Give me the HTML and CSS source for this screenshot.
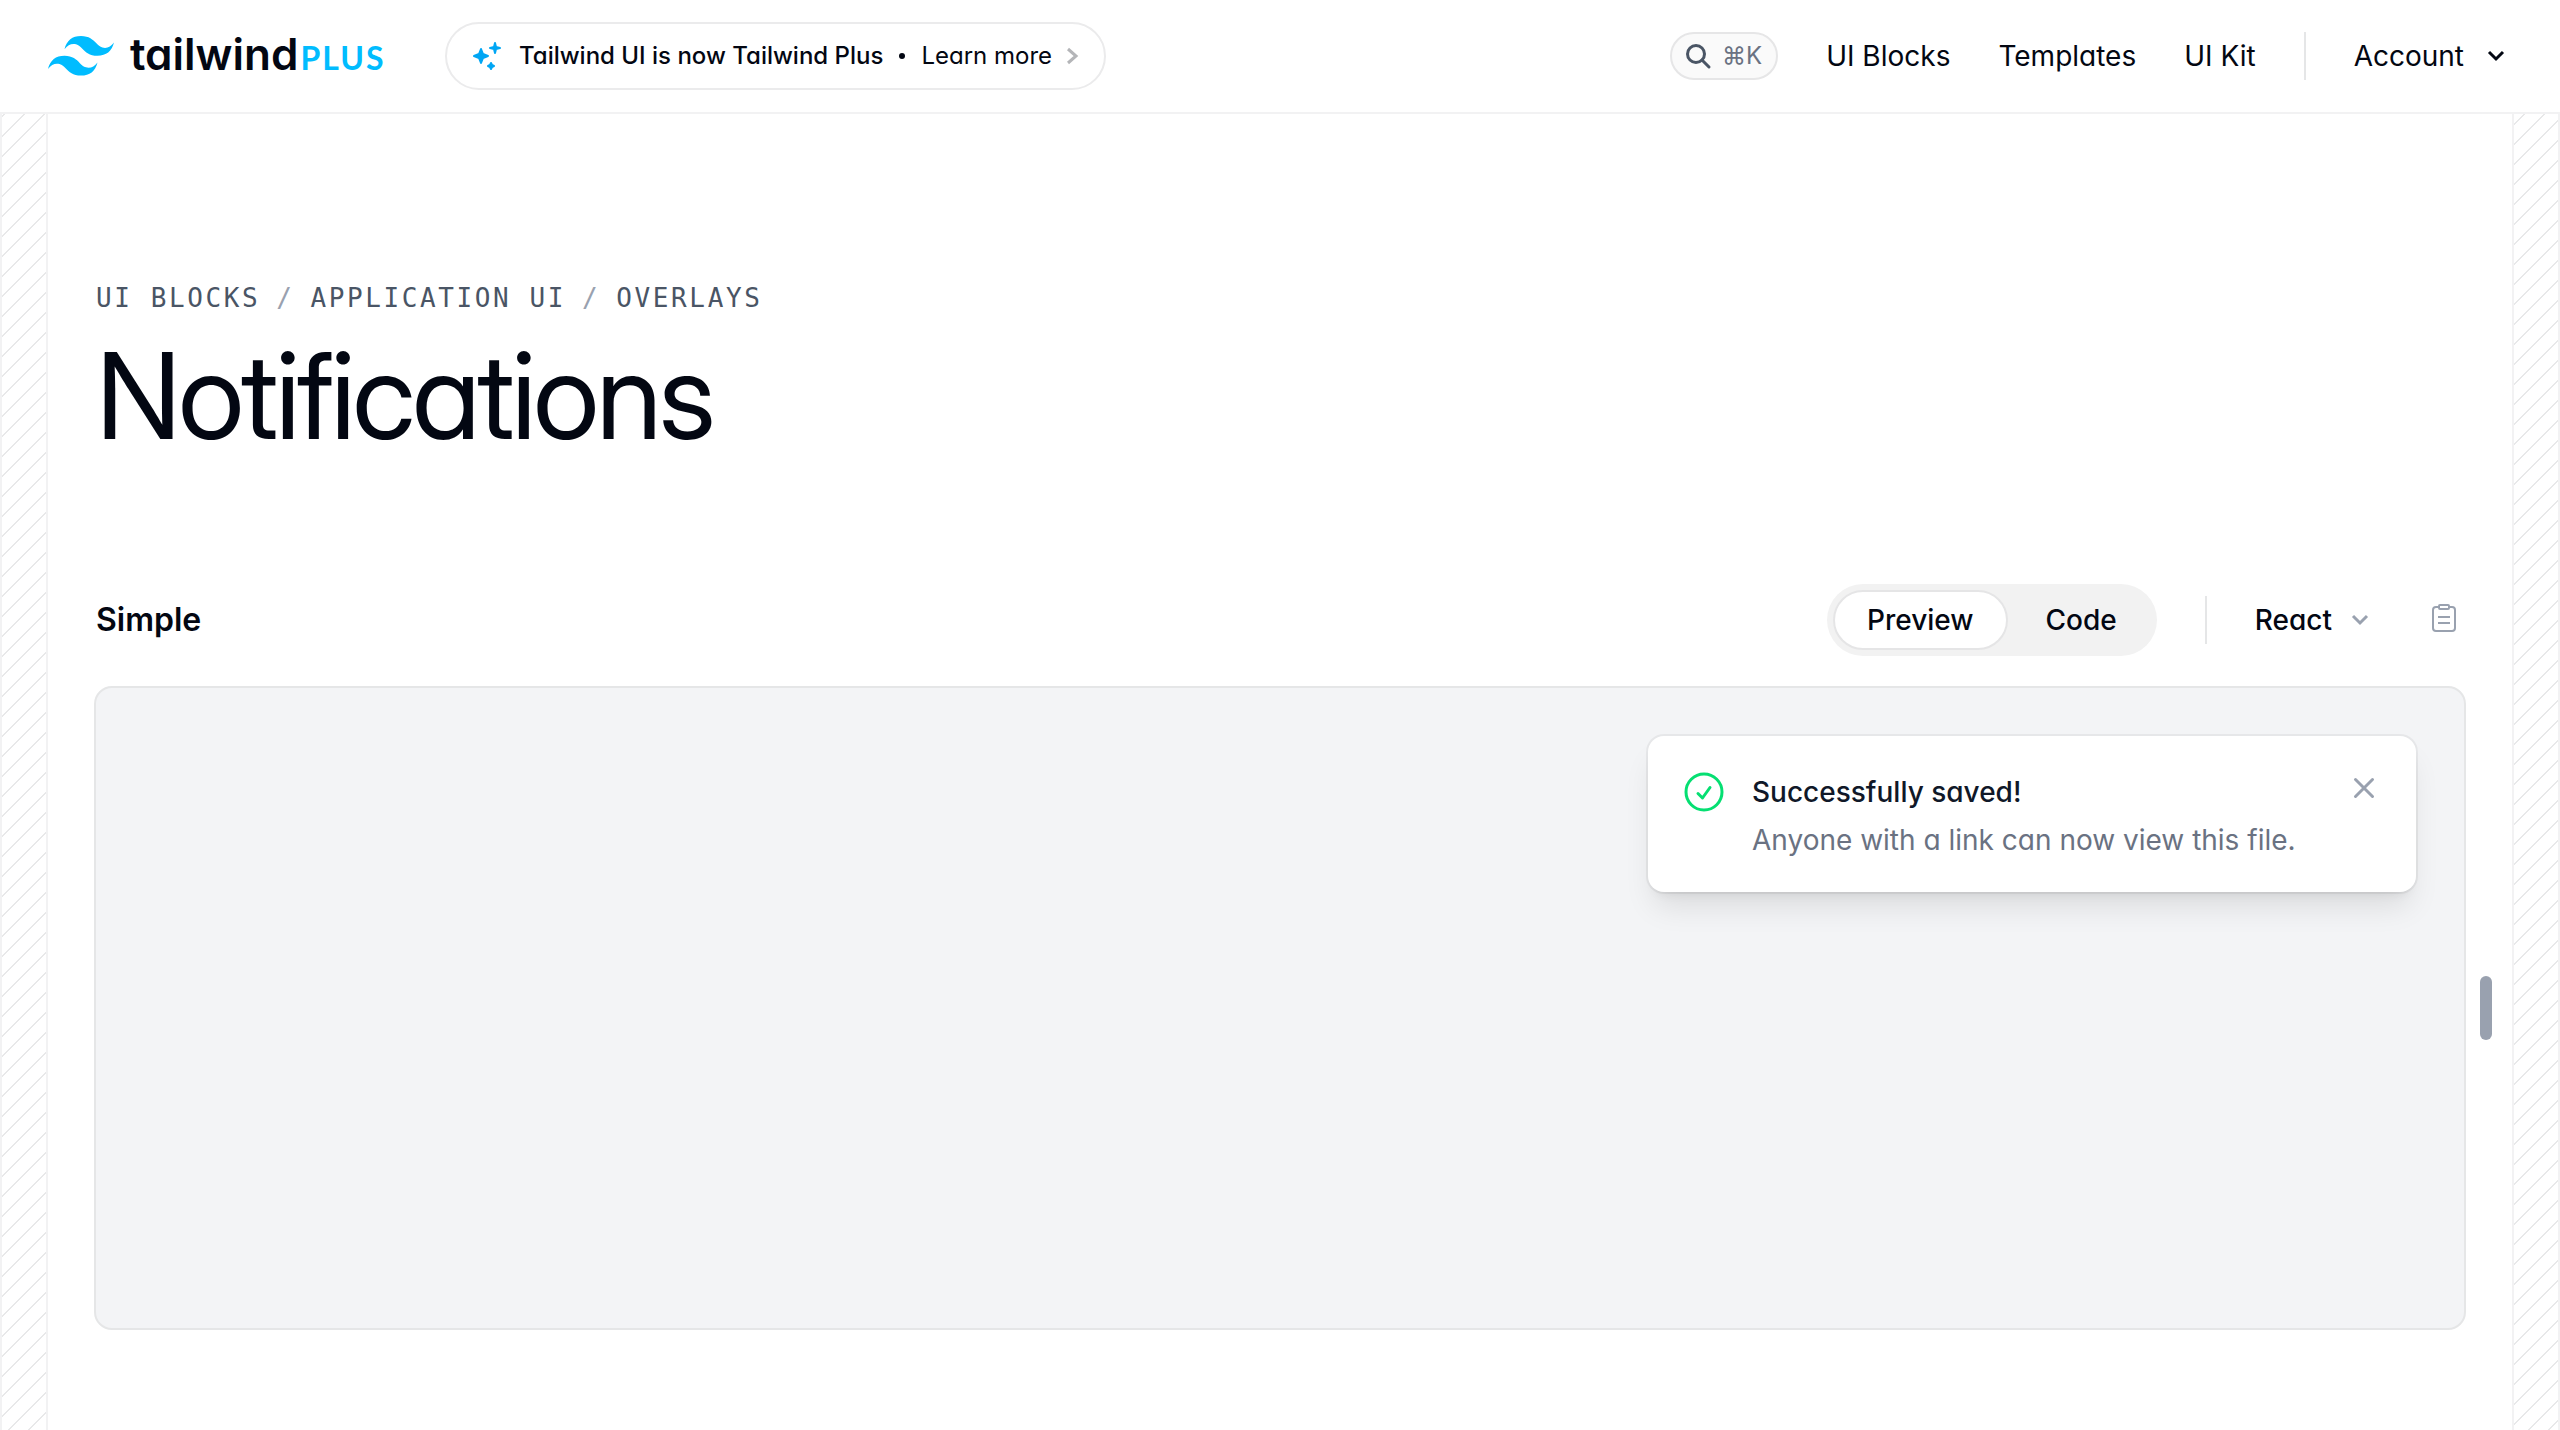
FILE: index.html
```html
<!DOCTYPE html>
<html lang="en">
<head>
<meta charset="utf-8">
<meta name="viewport" content="width=device-width, initial-scale=1">
<title>Notifications - Tailwind Plus</title>
<link rel="stylesheet" href="styles.css">
</head>
<body>
<header class="site-header">
  <a class="logo" href="#">
    <svg class="logo-mark" viewBox="0 0 66 40" aria-hidden="true"><path fill="currentColor" d="M33 0C24.200 0 18.700 4.400 16.500 13.200C19.800 8.800 23.650 7.150 28.050 8.250C30.561 8.877 32.355 10.699 34.342 12.716C37.578 16 41.323 19.800 49.500 19.800C58.300 19.800 63.800 15.400 66 6.600C62.700 11 58.850 12.650 54.450 11.550C51.939 10.923 50.145 9.101 48.158 7.084C44.922 3.800 41.177 0 33 0ZM16.500 19.800C7.700 19.800 2.200 24.200 0 33C3.300 28.600 7.150 26.950 11.550 28.050C14.061 28.677 15.855 30.499 17.842 32.516C21.078 35.800 24.823 39.600 33 39.600C41.800 39.600 47.300 35.200 49.500 26.400C46.200 30.800 42.350 32.450 37.950 31.350C35.439 30.723 33.645 28.901 31.658 26.884C28.422 23.600 24.677 19.800 16.500 19.800Z"/></svg>
    <span class="logo-text">tailwind<span class="logo-plus">PLUS</span></span>
  </a>
  <a class="announcement" href="#">
    <svg class="sparkles" viewBox="0 0 28 28" aria-hidden="true"><path d="M8 7l2 5 5 2-5 2-2 5-2-5-5-2 5-2zM22 1l1 4 4 1-4 1-1 4-1-4-4-1 4-1zM18 21l1 2 2 1-2 1-1 2-1-2-2-1 2-1z"/></svg>
    <strong class="announcement-title">Tailwind UI is now Tailwind Plus</strong>
    <span class="announcement-dot"></span>
    <span>Learn more</span>
    <svg class="announcement-arrow" viewBox="0 0 12 18" aria-hidden="true"><path d="M2 2l8 7-8 7"/></svg>
  </a>
  <nav class="site-nav" aria-label="Main">
    <button class="search" type="button" aria-label="Search">
      <svg class="search-icon" viewBox="0 0 24 24" aria-hidden="true"><circle cx="10" cy="10" r="8.500"/><path d="M16 16l7 7"/></svg>
      <kbd class="search-key">⌘K</kbd>
    </button>
    <a href="#">UI Blocks</a>
    <a href="#">Templates</a>
    <a href="#">UI Kit</a>
    <span class="divider"></span>
    <button class="account" type="button">Account
      <svg class="chevron" viewBox="0 0 16 10" aria-hidden="true"><path d="M1 1l7 7 7-7"/></svg>
    </button>
  </nav>
</header>
<div class="page">
  <div class="gutter"></div>
  <main class="content">
    <nav class="breadcrumb" aria-label="Breadcrumb">
      <a href="#">UI Blocks</a><span class="slash">/</span><a href="#">Application UI</a><span class="slash">/</span><a href="#">Overlays</a>
    </nav>
    <h1 class="title">Notifications</h1>
    <section class="example">
      <div class="example-bar">
        <h2 class="example-title">Simple</h2>
        <div class="tabs" role="tablist">
          <button class="tab tab-active" type="button" role="tab" aria-selected="true">Preview</button>
          <button class="tab" type="button" role="tab" aria-selected="false">Code</button>
        </div>
        <span class="divider divider-bar"></span>
        <button class="framework" type="button">React
          <svg class="chevron" viewBox="0 0 16 10" aria-hidden="true"><path d="M1 1l7 7 7-7"/></svg>
        </button>
        <button class="copy" type="button" aria-label="Copy code">
          <svg class="copy-icon" viewBox="0 0 24 28" aria-hidden="true"><path d="M6 3H4a3 3 0 0 0-3 3v18a3 3 0 0 0 3 3h16a3 3 0 0 0 3-3V6a3 3 0 0 0-3-3h-2M8 1h8a1 1 0 0 1 1 1v2a1 1 0 0 1-1 1H8a1 1 0 0 1-1-1V2a1 1 0 0 1 1-1zM6 13h12M6 19h12"/></svg>
        </button>
      </div>
      <div class="preview">
        <div class="toast" role="status">
          <svg class="toast-check" viewBox="0 0 24 24" aria-hidden="true"><path d="M9 12.750 11.250 15 15 9.750M21 12a9 9 0 1 1-18 0 9 9 0 0 1 18 0Z"/></svg>
          <div class="toast-body">
            <p class="toast-title">Successfully saved!</p>
            <p class="toast-text">Anyone with a link can now view this file.</p>
          </div>
          <button class="toast-close" type="button" aria-label="Close">
            <svg viewBox="0 0 20 20" aria-hidden="true"><path d="M5.750 5.750l8.500 8.500M14.250 5.750l-8.500 8.500"/></svg>
          </button>
        </div>
        <span class="resize-handle"></span>
      </div>
    </section>
  </main>
  <div class="gutter"></div>
</div>
</body>
</html>
```
FILE: styles.css
```css
:root {
  --ink: #030712;
  --line: #f2f2f3;
  --line-strong: #e5e6e7;
  --hatch: rgb(3 7 18 / 9%);
  --muted: #99a1af;
}

* {
  box-sizing: border-box;
}

body {
  margin: 0;
  min-height: 100vh;
  display: flex;
  flex-direction: column;
  background: #fff;
  color: var(--ink);
  font-family: Inter, "Liberation Sans", sans-serif;
  font-feature-settings: "cv11";
  font-size: 28px;
  line-height: 40px;
  -webkit-font-smoothing: antialiased;
}

a {
  color: inherit;
  text-decoration: none;
}

button {
  margin: 0;
  padding: 0;
  border: 0;
  background: none;
  color: inherit;
  font: inherit;
  font-feature-settings: inherit;
  cursor: pointer;
}

svg {
  display: block;
  flex: none;
  overflow: visible;
}

h1, h2, p {
  margin: 0;
}

.site-header {
  display: flex;
  align-items: center;
  height: 114px;
  padding: 0 48px;
  border-bottom: 2px solid var(--line);
}

.logo {
  display: flex;
  align-items: center;
  gap: 16px;
}

.logo-mark {
  width: 66px;
  height: 40px;
  color: #00bcff;
}

.logo-text {
  width: 254px;
  font-size: 44px;
  font-weight: 600;
  white-space: nowrap;
}

.logo-plus {
  margin-left: 2px;
  color: #00bcff;
  font-family: Lato, sans-serif;
  font-size: 32px;
  font-weight: 700;
  letter-spacing: 2px;
}

.announcement {
  display: flex;
  align-items: center;
  height: 68px;
  margin-left: 61px;
  padding: 0 26px;
  border: 2px solid #ebebec;
  border-radius: 34px;
  font-size: 24px;
}

.sparkles {
  width: 28px;
  height: 28px;
  margin-right: 18px;
  color: #00a6f4;
  fill: currentColor;
  stroke: currentColor;
  stroke-width: 2;
  stroke-linejoin: round;
}

.announcement-title {
  font-weight: 500;
}

.announcement-dot {
  width: 6px;
  height: 6px;
  margin: 0 16px;
  border-radius: 50%;
  background: currentColor;
}

.announcement-arrow {
  width: 12px;
  height: 18px;
  margin-left: 14px;
  fill: none;
  stroke: #b4b5b8;
  stroke-width: 3;
}

.site-nav {
  display: flex;
  align-items: center;
  gap: 48px;
  margin-left: auto;
}

.search {
  display: flex;
  align-items: center;
  gap: 12px;
  height: 48px;
  padding: 0 14px;
  border: 2px solid #e6e6e7;
  border-radius: 24px;
  background: #fafafa;
}

.search-icon {
  width: 24px;
  height: 24px;
  fill: none;
  stroke: #4a5565;
  stroke-width: 3;
  stroke-linecap: round;
}

.search-key {
  color: #6a7282;
  font-family: inherit;
  font-size: 24px;
}

.divider {
  width: 2px;
  height: 48px;
  background: var(--line-strong);
}

.account {
  display: flex;
  align-items: center;
  gap: 24px;
  padding-right: 8px;
}

.chevron {
  width: 16px;
  height: 10px;
  fill: none;
  stroke: currentColor;
  stroke-width: 3;
}

.page {
  flex: 1;
  display: grid;
  grid-template-columns: 48px 1fr 48px;
}

.gutter {
  border: solid var(--line);
  border-width: 0 2px;
  background-image: repeating-linear-gradient(315deg, var(--hatch) 0, var(--hatch) 2px, transparent 0, transparent 50%);
  background-size: 20px 20px;
  background-attachment: fixed;
}

.content {
  padding: 164px 48px 100px;
}

.breadcrumb {
  display: flex;
  gap: 16px;
  color: #4a5565;
  font-family: "DejaVu Sans Mono", monospace;
  font-size: 26px;
  letter-spacing: 0.1em;
  text-transform: uppercase;
}

.slash {
  color: var(--muted);
}

.title {
  margin-top: 18px;
  font-family: "Inter Display", Inter, "Liberation Sans", sans-serif;
  font-size: 120px;
  font-weight: 400;
  line-height: 120px;
  letter-spacing: -0.025em;
}

.example {
  margin-top: 128px;
}

.example-bar {
  display: flex;
  align-items: center;
  height: 72px;
  font-weight: 500;
}

.example-title {
  margin-right: auto;
  font-size: 32px;
  font-weight: 600;
}

.tabs {
  display: flex;
  gap: 4px;
  padding: 6px;
  border-radius: 36px;
  background: #f2f2f2;
}

.tab {
  height: 60px;
  padding: 0 32px;
  border: 2px solid transparent;
  border-radius: 30px;
  font-weight: 500;
}

.tab-active {
  border-color: #e5e5e6;
  background: #fff;
}

.divider-bar {
  margin: 0 48px;
}

.framework {
  display: flex;
  align-items: center;
  gap: 20px;
}

.framework .chevron {
  color: var(--muted);
}

.copy {
  margin: 0 8px 0 64px;
  padding-bottom: 4px;
}

.copy-icon {
  width: 24px;
  height: 28px;
  fill: none;
  stroke: var(--muted);
  stroke-width: 2;
}

.preview {
  position: relative;
  display: flex;
  justify-content: flex-end;
  align-items: flex-start;
  min-height: 644px;
  margin: 30px -2px 0;
  padding: 48px;
  border: 2px solid var(--line-strong);
  border-radius: 18px;
  background: #f3f4f6;
}

.toast {
  display: flex;
  width: 768px;
  padding: 32px;
  border-radius: 16px;
  background: #fff;
  box-shadow: 0 0 0 2px rgb(0 0 0 / 5%), 0 20px 30px -6px rgb(0 0 0 / 10%), 0 8px 12px -8px rgb(0 0 0 / 10%);
}

.toast-check {
  width: 48px;
  height: 48px;
  fill: none;
  stroke: #05df72;
  stroke-width: 1.5;
  stroke-linecap: round;
  stroke-linejoin: round;
}

.toast-body {
  flex: 1;
  padding-top: 4px;
  margin-left: 24px;
}

.toast-title {
  color: #101828;
  font-weight: 500;
}

.toast-text {
  margin-top: 8px;
  color: #6a7282;
}

.toast-close {
  width: 40px;
  height: 40px;
}

.toast-close svg {
  fill: none;
  stroke: var(--muted);
  stroke-width: 1.5;
  stroke-linecap: round;
}

.resize-handle {
  position: absolute;
  top: 50%;
  right: -28px;
  width: 12px;
  height: 64px;
  margin-top: -32px;
  border-radius: 6px;
  background: var(--muted);
}
```
